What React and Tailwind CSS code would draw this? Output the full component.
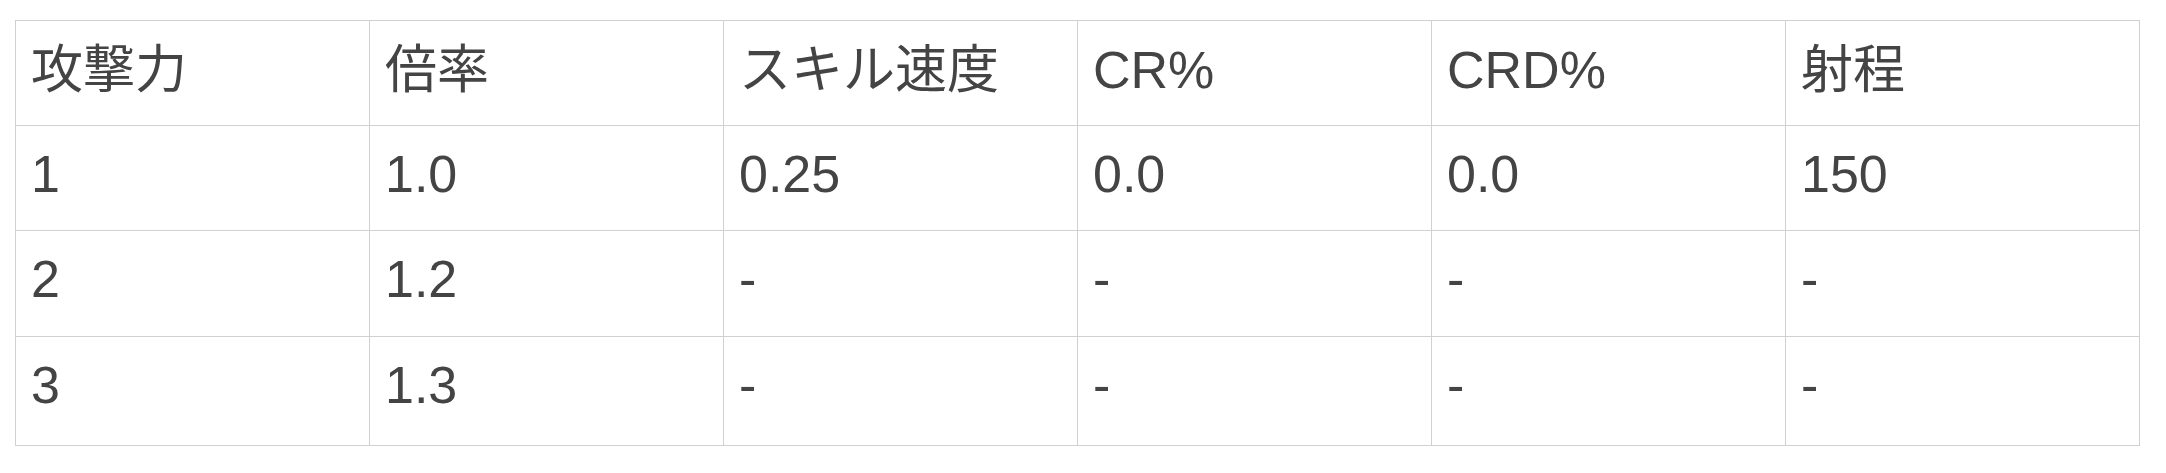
const header = ['攻撃力', '倍率', 'スキル速度', 'CR%', 'CRD%', '射程'];

const rows = [
  { h: 'h-[105px]', cells: ['1', '1.0', '0.25', '0.0', '0.0', '150'] },
  { h: 'h-[106px]', cells: ['2', '1.2', '-', '-', '-', '-'] },
  { h: 'h-[109px]', cells: ['3', '1.3', '-', '-', '-', '-'] },
];

const Cell = ({ children, h, head }) => (
  <div
    className={`${h} border-r border-b border-[#d0d0d0] pl-[15px] pr-4 ${head ? 'pt-[13px]' : 'pt-[12px]'} leading-[72px] whitespace-nowrap overflow-hidden`}
  >
    {children}
  </div>
);

export default function App() {
  return (
    <div className="w-[2166px] h-[473px] bg-white pt-[20px] pl-[15px]">
      <div
        className="w-[2125px] grid grid-cols-[repeat(6,354px)] border-l border-t border-[#d0d0d0] text-[#444444] text-[52px]"
        style={{ fontFamily: '"Liberation Sans", "Noto Sans CJK JP", sans-serif' }}
      >
        {header.map((t) => (
          <Cell key={t} h="h-[105px]" head>
            {t}
          </Cell>
        ))}
        {rows.map((r, i) =>
          r.cells.map((c, j) => (
            <Cell key={`${i}-${j}`} h={r.h}>
              {c}
            </Cell>
          ))
        )}
      </div>
    </div>
  );
}
